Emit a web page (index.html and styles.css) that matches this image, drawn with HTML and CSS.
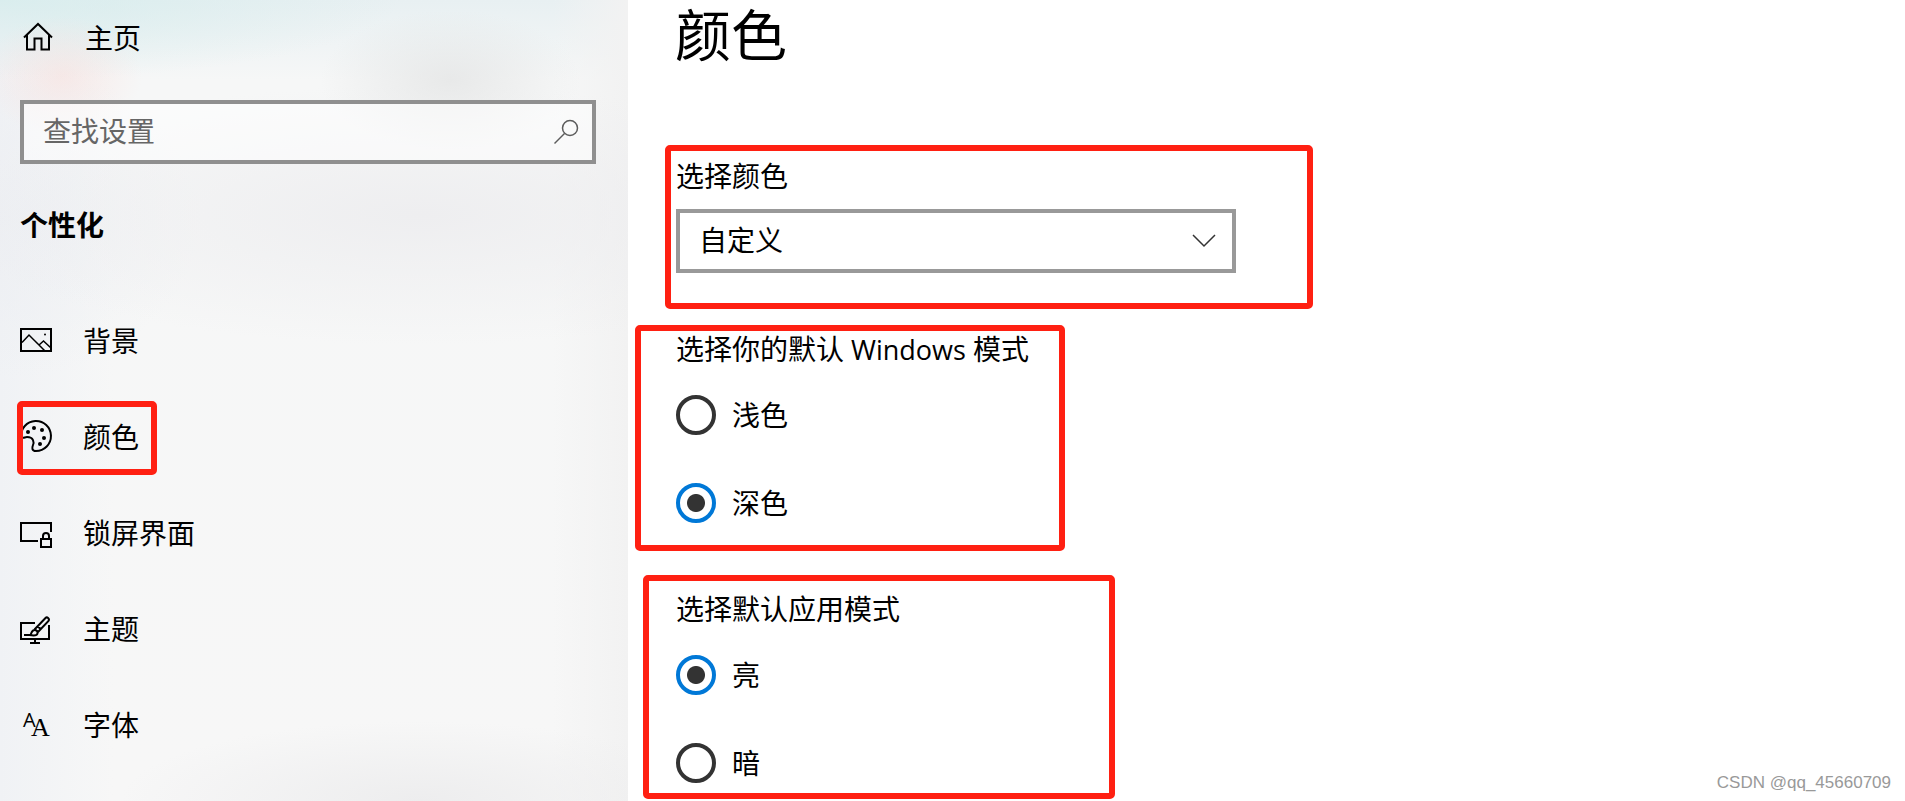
FILE: index.html
```html
<!DOCTYPE html>
<html lang="zh-CN">
<head>
<meta charset="utf-8">
<meta name="viewport" content="width=device-width, initial-scale=1">
<title>颜色</title>
<link rel="stylesheet" href="styles.css">
</head>
<body>
<div class="app">
  <aside class="sidebar">
    <a class="home" href="#home">
      <svg class="icon" viewBox="0 0 32 32" aria-hidden="true"><path d="M4 15.5 18 2l14 13.5M7 13v14.500h7.500v-11h7v11H29V13"/></svg>
      主页
    </a>
    <form class="search" role="search">
      <input class="search-input" type="text" placeholder="查找设置" aria-label="查找设置">
      <button class="search-button" type="button" aria-label="搜索">
        <svg class="icon icon-search" viewBox="0 0 32 32" aria-hidden="true"><circle cx="20" cy="12" r="7.500"/><path d="M14.500 17.500 4.500 27.500"/></svg>
      </button>
    </form>
    <h2 class="group-title">个性化</h2>
    <nav class="nav">
      <a class="nav-link" href="#background">
        <svg class="icon" viewBox="0 0 32 32" aria-hidden="true"><path d="M1 5h30v22H1z"/><path class="fine" d="m2 18.500 7-7.500 15.500 15.500M19 21l4.500-4L31 24"/><circle class="solid" cx="25" cy="10.500" r="1"/></svg>
        背景
      </a>
      <a class="nav-link nav-link-active" href="#colors" aria-current="page">
        <svg class="icon" viewBox="0 0 32 32" aria-hidden="true"><path d="M1 17A15 15 0 1 1 16 31c-4.500 0-4-3.500-3-6s1-8-6-8c-2.500 0-3.500 2-6 0z"/><g class="solid"><circle cx="8" cy="12" r="2"/><circle cx="14" cy="8" r="2"/><circle cx="22" cy="10" r="2"/><circle cx="24" cy="18" r="2"/><circle cx="20" cy="24" r="2"/></g></svg>
        颜色
      </a>
      <a class="nav-link" href="#lockscreen">
        <svg class="icon" viewBox="0 0 32 32" aria-hidden="true"><path d="M18 25H1V7h30v9M21 23h10v8H21zM23 23v-3a3 3 0 0 1 6 0v3"/></svg>
        锁屏界面
      </a>
      <a class="nav-link" href="#themes">
        <svg class="icon" viewBox="0 0 32 32" aria-hidden="true"><path d="M15 11H1v16h28V13M15 27v4M10 31h10"/><path d="M4 23h6c1.500 0 1-5 4.500-5 2 0 3.500 1.500 3 3.500-.5 2-3 2.500-8 1.500M14.500 17.500 25.500 6c1.500-1.500 4.500.5 3 3L17.500 20.500M18 14.500l3 3"/></svg>
        主题
      </a>
      <a class="nav-link" href="#fonts">
        <svg class="icon" viewBox="0 0 32 32" aria-hidden="true"><text class="glyph-sans" x="3" y="19">A</text><text class="glyph-serif" x="11" y="28">A</text></svg>
        字体
      </a>
    </nav>
  </aside>

  <main class="content">
    <h1 class="page-title">颜色</h1>

    <section class="marked marked-color">
      <label class="field-label" for="color-mode">选择颜色</label>
      <div class="select-wrap">
        <select class="select" id="color-mode">
          <option>浅色</option>
          <option>深色</option>
          <option selected>自定义</option>
        </select>
        <svg class="chevron" viewBox="0 0 24 14" aria-hidden="true"><path d="m1 1 11 11L23 1"/></svg>
      </div>
    </section>

    <fieldset class="marked marked-windows" aria-labelledby="windows-mode">
      <div class="field-label" id="windows-mode">选择你的默认<span class="latin"> Windows </span>模式</div>
      <div class="options">
        <label class="option"><input class="radio" type="radio" name="windows">浅色</label>
        <label class="option"><input class="radio" type="radio" name="windows" checked>深色</label>
      </div>
    </fieldset>

    <fieldset class="marked marked-apps" aria-labelledby="app-mode">
      <div class="field-label" id="app-mode">选择默认应用模式</div>
      <div class="options">
        <label class="option"><input class="radio" type="radio" name="apps" checked>亮</label>
        <label class="option"><input class="radio" type="radio" name="apps">暗</label>
      </div>
    </fieldset>
  </main>
  <div class="watermark">CSDN @qq_45660709</div>
</div>
</body>
</html>
```
FILE: styles.css
```css
* {
  box-sizing: border-box;
}

body {
  margin: 0;
  background: #fff;
  color: #000;
  font: 28px/36px "Open Sans", "Noto Sans CJK SC", sans-serif;
}

input,
select,
button {
  font: inherit;
  color: inherit;
}

.app {
  position: relative;
  display: flex;
  min-height: 100vh;
}

.sidebar {
  flex: none;
  width: clamp(320px, 33vw, 628px);
  padding: 18px 32px 0 20px;
  background:
    radial-gradient(ellipse 80px 60px at 62px 76px, rgba(248, 224, 221, 0.6), rgba(248, 228, 225, 0)),
    radial-gradient(ellipse 130px 70px at 450px 80px, rgba(226, 227, 227, 0.7), rgba(236, 236, 236, 0)),
    radial-gradient(ellipse 400px 80px at 0 0, rgba(212, 236, 236, 0.8), rgba(228, 240, 240, 0)),
    radial-gradient(ellipse 480px 130px at 420px 215px, rgba(237, 237, 239, 0.9), rgba(242, 242, 243, 0)),
    radial-gradient(ellipse 200px 160px at 0 220px, rgba(236, 238, 242, 0.8), rgba(242, 243, 245, 0)),
    radial-gradient(ellipse 300px 80px at 420px 801px, rgba(236, 236, 237, 0.9), rgba(244, 244, 244, 0)),
    linear-gradient(90deg, #f0f2f5, rgba(246, 247, 247, 0) 18%, rgba(246, 247, 247, 0) 88%, #f2f2f2),
    linear-gradient(#e8f0f2, #f6f7f7 80px, #f7f7f7);
}

.home,
.nav-link {
  display: flex;
  align-items: center;
  height: 40px;
  color: inherit;
  text-decoration: none;
}

.home {
  gap: 33px;
}

.icon {
  flex: none;
  width: 32px;
  height: 32px;
  overflow: visible;
  fill: none;
  stroke: #000;
  stroke-width: 2;
}

.icon .fine {
  stroke-width: 1.5;
}

.icon .solid {
  fill: #000;
  stroke: none;
}

.icon text {
  fill: #000;
  stroke: none;
}

.glyph-sans {
  font: 20px "Open Sans", sans-serif;
}

.glyph-serif {
  font: 26px "Liberation Serif", serif;
}

.search {
  display: flex;
  align-items: center;
  height: 64px;
  margin-top: 42px;
  border: 4px solid #8f8f8f;
  background: rgba(255, 255, 255, 0.5);
}

.search-input {
  flex: 1;
  min-width: 0;
  padding: 0 19px 2px;
  border: 0;
  outline: 0;
  background: none;
}

.search-input::placeholder {
  color: #666;
  opacity: 1;
}

.search-button {
  display: flex;
  padding: 0 10px 0 0;
  border: 0;
  background: none;
}

.icon-search {
  stroke: #5c5c5c;
  stroke-width: 1.5;
}

.group-title {
  margin: 43px 0 78px;
  font-size: 28px;
  line-height: 36px;
  font-weight: 700;
}

.nav {
  display: flex;
  flex-direction: column;
  align-items: flex-start;
  gap: 56px;
}

.nav-link {
  position: relative;
  gap: 31px;
}

.nav-link .icon {
  margin-bottom: 2px;
}

.nav-link-active::after {
  content: "";
  position: absolute;
  inset: -16px -18px -18px -3px;
  border: 6px solid #ff2012;
  border-radius: 5px;
}

.content {
  flex: 1;
  min-width: 0;
  padding: 0 16px 0 7px;
}

.page-title {
  margin: 0 0 77px 40px;
  font-size: 56px;
  line-height: 68px;
  font-weight: 400;
}

.marked {
  min-width: 0;
  max-width: 100%;
  margin: 0;
  border: 6px solid #ff2012;
  border-radius: 5px;
}

.marked-color {
  width: 648px;
  margin-left: 30px;
  padding: 7px 71px 30px 5px;
}

.marked-windows {
  width: 430px;
  margin-top: 16px;
  padding: 0 10px 22px 35px;
}

.marked-apps {
  width: 472px;
  margin: 24px 0 0 8px;
  padding: 10px 10px 10px 27px;
}

.field-label {
  display: block;
  height: 36px;
  white-space: nowrap;
}

.latin {
  font-size: 27px;
}

.select-wrap {
  position: relative;
  margin-top: 15px;
}

.select {
  display: block;
  width: 100%;
  height: 64px;
  padding: 0 60px 2px 19px;
  border: 4px solid #999;
  border-radius: 0;
  background: #fff;
  appearance: none;
}

.chevron {
  position: absolute;
  top: 25px;
  right: 20px;
  width: 24px;
  height: 14px;
  fill: none;
  stroke: #333;
  stroke-width: 1.5;
  pointer-events: none;
}

.options {
  display: flex;
  flex-direction: column;
  align-items: flex-start;
  gap: 48px;
  margin-top: 28px;
}

.option {
  display: flex;
  align-items: center;
  gap: 16px;
  height: 40px;
}

.radio {
  flex: none;
  width: 40px;
  height: 40px;
  margin: 0;
  border: 4px solid #333;
  border-radius: 50%;
  background: #fff;
  appearance: none;
}

.radio:checked {
  border-color: #0078d7;
  background: radial-gradient(circle, #333 8.5px, #fff 9.5px);
}

.watermark {
  position: absolute;
  right: 14px;
  bottom: 7px;
  color: #999;
  font: 17px/22px "Liberation Sans", sans-serif;
}
```
